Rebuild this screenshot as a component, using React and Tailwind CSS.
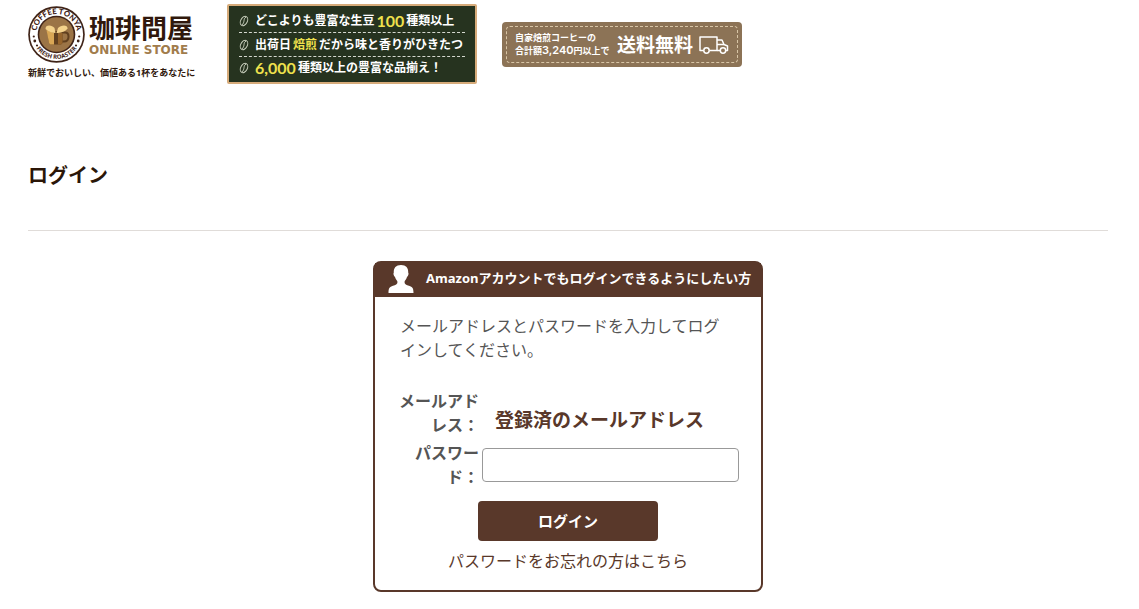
import { useState } from 'react';

function Emblem() {
  return (
    <svg viewBox="0 0 57 57" className="size-[57px] shrink-0" aria-hidden="true">
      <defs>
        <path id="arcTop" d="M8.22 31.5 A20.5 20.5 0 1 1 48.78 31.5" />
        <path id="arcBottom" d="M4.63 34 A24.5 24.5 0 0 0 52.37 34" />
      </defs>
      <circle cx="28.5" cy="28.5" r="28.3" fill="#3f2317" />
      <circle cx="28.5" cy="28.5" r="26.6" fill="#fff" />
      <circle cx="28.5" cy="28.5" r="18.8" fill="#3f2317" />
      <circle cx="28.5" cy="28.5" r="17.2" fill="#9b7446" />
      <g fill="#3f2317" textAnchor="middle" fontFamily="Lato, sans-serif">
        <text fontSize="7.7" fontWeight="900">
          <textPath href="#arcTop" startOffset="50%">COFFEE TONYA</textPath>
        </text>
        <text fontSize="6" fontWeight="700" fontFamily="'Open Sans', sans-serif">
          <textPath href="#arcBottom" startOffset="50%">FRESH ROASTER</textPath>
        </text>
      </g>
      <g fill="#3f2317">
        <circle cx="5.8" cy="30.5" r="1.1" />
        <circle cx="6.8" cy="35" r="1.4" />
        <circle cx="9" cy="39.5" r="1.1" />
        <circle cx="51.2" cy="30.5" r="1.1" />
        <circle cx="50.2" cy="35" r="1.4" />
        <circle cx="48" cy="39.5" r="1.1" />
      </g>
      <path d="M33 26.5 h4 q3.5 0 3.5 4 q0 5-4.500 5 h-3" fill="none" stroke="#61401f" strokeWidth="2" />
      <path d="M19 25 H34.500 V37 L33 38.500 H22 L21 37 Z" fill="#61401f" />
      <path d="M18.500 24 L26 27 V38.500 H22 L21 37 Z" fill="#d9a755" />
      <path d="M30 27 h4.500 v10 l-1.500 1.500 h-3 z" fill="#96652c" />
      <path d="M17.500 23 C17 18.500 24 18.500 26.500 22 L27.500 27 C24 27 20.500 25.500 17.500 23 Z" fill="#f4d28b" />
      <path d="M39.500 22.500 C40 18.500 33 18.500 30 22 L28.500 27 C32 27 37 26 39.500 22.500 Z" fill="#f4d28b" />
    </svg>
  );
}

function Bean() {
  return (
    <svg viewBox="0 0 10 12" className="mr-[6px] h-3 w-[10px] shrink-0" fill="none" stroke="#c9cfbd" aria-hidden="true">
      <ellipse cx="5" cy="6" rx="3.300" ry="5" transform="rotate(28 5 6)" />
      <path d="M7.200 2 C3.500 4 6.500 7 2.800 10" />
    </svg>
  );
}

function Truck() {
  return (
    <svg viewBox="0 0 30 18" className="h-[18px] w-[30px] shrink-0" fill="none" stroke="#fff" strokeWidth="1.500" strokeLinejoin="round" aria-hidden="true">
      <path d="M4.500 14.500 H1 V1 H18 V14.500 H10.500" />
      <path d="M18 4 H23 L25 8.500 L28.500 10 V14.500 H27" />
      <path d="M18 8.500 H25 M18 14.500 H21" />
      <circle cx="7.500" cy="14.500" r="2.700" />
      <circle cx="24" cy="14.500" r="2.700" />
    </svg>
  );
}

function Header() {
  return (
    <header className="flex items-start pt-1">
      <a href="#" className="mt-[2px] mr-[30px] block w-[169px] shrink-0 text-[#30180c]">
        <span className="flex">
          <Emblem />
          <span className="ml-1 block pt-2 whitespace-nowrap">
            <span className="block text-[26px] leading-[29px] font-bold">珈琲問屋</span>
            <span className="block font-['DejaVu_Sans'] text-[12px] leading-[14px] font-bold text-[#a17c4c]">ONLINE STORE</span>
          </span>
        </span>
        <span className="mt-1 block text-[9px] leading-3 font-bold whitespace-nowrap">
          新鮮でおいしい、価値ある1杯をあなたに
        </span>
      </a>

      <ul className="mr-[25px] h-20 w-[250px] shrink-0 rounded-xs border-2 border-[#d6ab7a] bg-[#26331f] px-[10px] pt-[3px] text-[12px] font-bold whitespace-nowrap text-white">
        <li className="flex h-6 items-center border-b border-dashed border-[#d5d8cf]">
          <Bean />
          どこよりも豊富な生豆
          <span className="mx-[2px] font-[Lato] text-[16px] text-[#efe14d]">100</span>
          種類以上
        </li>
        <li className="flex h-6 items-center border-b border-dashed border-[#d5d8cf]">
          <Bean />
          出荷日
          <span className="mx-[2px] text-[#efe14d]">焙煎</span>
          だから味と香りがひきたつ
        </li>
        <li className="flex h-[22px] items-center">
          <Bean />
          <span className="mr-[2px] font-[Lato] text-[16px] text-[#efe14d]">6,000</span>
          種類以上の豊富な品揃え！
        </li>
      </ul>

      <div className="mt-[18px] h-[45px] w-[240px] shrink-0 rounded-sm bg-[#8c7356] p-1 text-white">
        <div className="flex h-full items-center rounded-sm border border-dashed border-[#d8c5a6] pl-2 whitespace-nowrap">
          <p className="w-[102px] text-[9px] leading-3 font-bold">
            自家焙煎コーヒーの
            <br />
            合計額<span className="font-[Inter] text-[11px] font-semibold">3,240</span>円以上で
          </p>
          <strong className="mr-[6px] text-[19px] leading-6 font-bold">送料無料</strong>
          <Truck />
        </div>
      </div>
    </header>
  );
}

export default function App() {
  const [password, setPassword] = useState('');

  return (
    <div className="bg-white pr-[31px] pl-7 font-['Open_Sans','Noto_Sans_CJK_JP',sans-serif] text-[#555]">
      <Header />

      <main>
        <h1 className="mt-[76px] border-b border-[#e0dcd9] pb-[38px] text-[20px] leading-8 font-bold text-[#2b1608]">ログイン</h1>

        <section className="mx-auto mt-[30px] mb-4 max-w-[390px] rounded-lg border-2 border-[#59382a]">
          <h2 className="flex h-[34px] items-center bg-[#59382a] pb-[2px] pl-[13px] text-[13px] font-bold whitespace-nowrap text-white">
            <svg viewBox="0 0 26 28" className="mr-3 h-7 w-[26px] shrink-0" fill="#fff" aria-hidden="true">
              <path d="M13 0 C8 0 5.500 3 5.800 7.500 C5 8.500 5.700 11 7 12 C7.700 14.500 9.500 15.500 9.500 17 C9.500 19.500 7.500 19.800 5 20.800 C1.500 22 0.500 23 0.500 28 H25.500 C25.500 23 24.500 22 21 20.800 C18.500 19.800 16.500 19.500 16.500 17 C16.500 15.500 18.300 14.500 19 12 C20.300 11 21 8.500 20.200 7.500 C20.500 3 18 0 13 0 Z" />
            </svg>
            Amazonアカウントでもログインできるようにしたい方
          </h2>

          <form onSubmit={(e) => e.preventDefault()} className="px-[22px] pt-[17px] pb-[17px]">
            <p className="mb-[27px] pr-4 pl-[3px] text-[16px] leading-6">
              メールアドレスとパスワードを入力してログインしてください。
            </p>

            <div className="flex items-center">
              <span className="w-[82px] shrink-0 text-right text-[16px] leading-6 font-bold">メールアドレス：</span>
              <span className="pt-[14px] pl-4 text-[19px] leading-6 font-bold whitespace-nowrap text-[#59382a]">
                登録済のメールアドレス
              </span>
            </div>

            <div className="mt-1 flex items-center">
              <label htmlFor="password" className="w-[82px] shrink-0 text-right text-[16px] leading-6 font-bold">
                パスワード：
              </label>
              <input
                id="password"
                type="password"
                value={password}
                onChange={(e) => setPassword(e.target.value)}
                className="ml-[3px] h-[34px] min-w-0 flex-1 rounded-sm border border-[#999] bg-white px-2"
              />
            </div>

            <button type="submit" className="mx-auto mt-3 block h-10 w-[180px] rounded-sm bg-[#59382a] text-[15px] font-bold text-white">
              ログイン
            </button>
            <a href="#" className="mt-2 block text-center text-[16px] leading-6 text-[#59382a]">
              パスワードをお忘れの方はこちら
            </a>
          </form>
        </section>
      </main>
    </div>
  );
}
